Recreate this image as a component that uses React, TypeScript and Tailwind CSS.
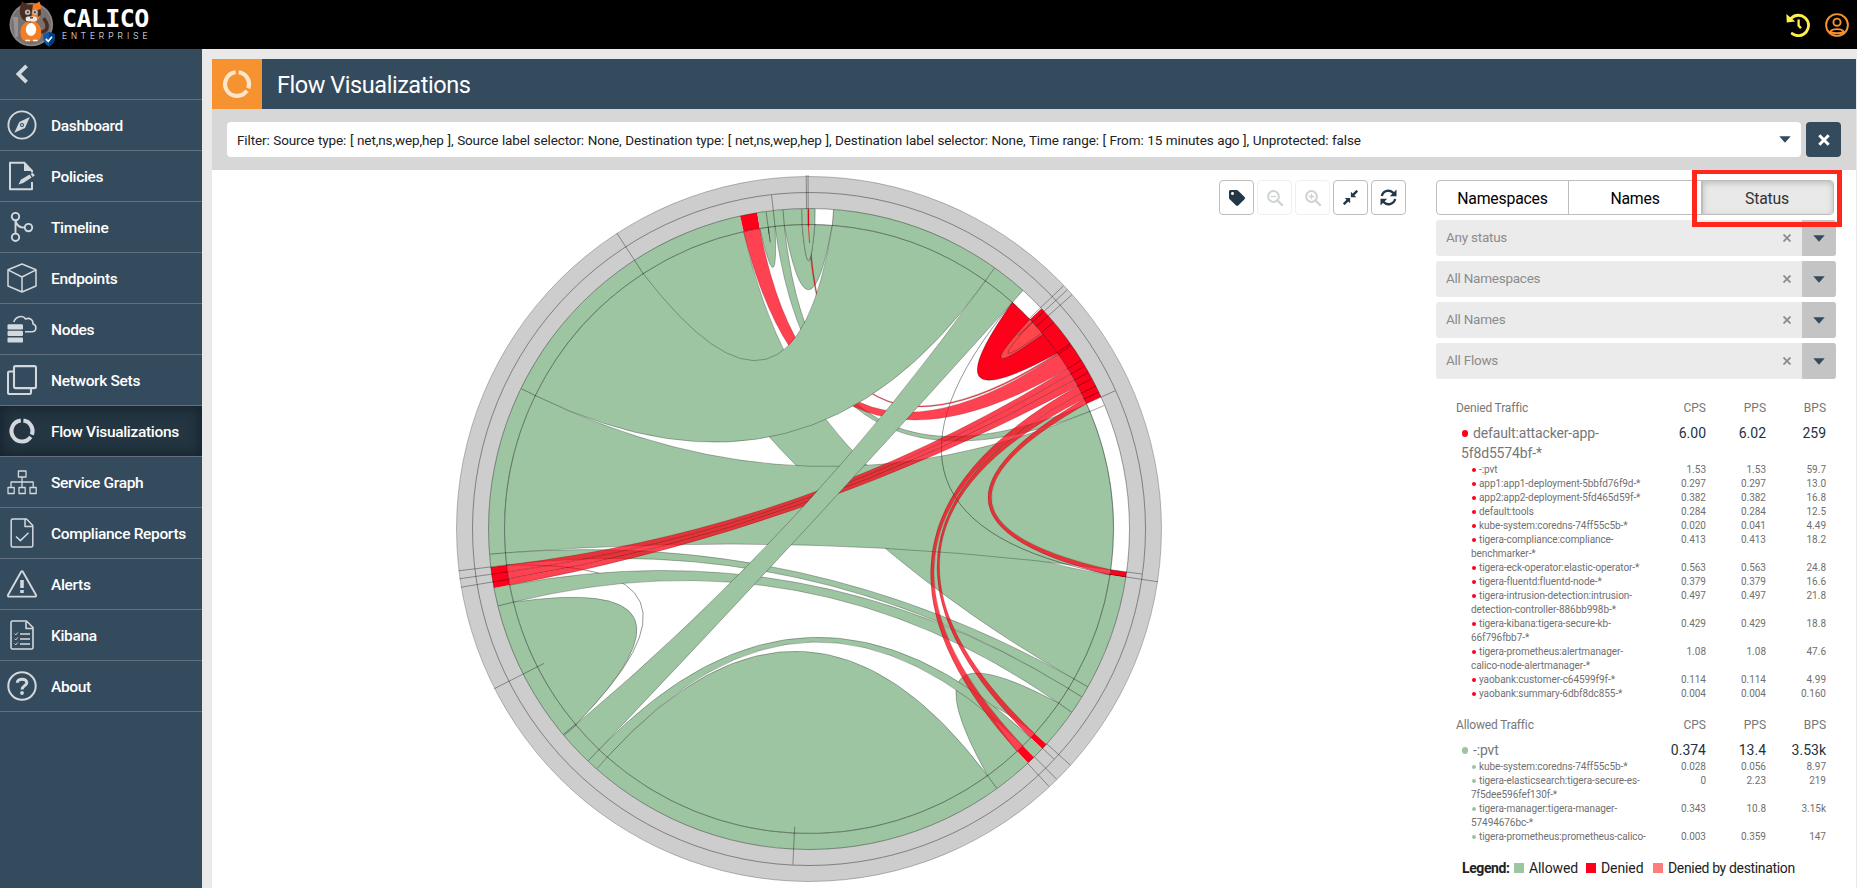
import React from "react";
import { FaTag } from "react-icons/fa";

/* ---------- chord diagram ---------- */

const R_IN = 304.5;
const RINGS = [320.5, 336.5, 352.5];
const GREEN = "#9dc5a2";
const RED = "#ff001b";
const RED_SOFT = "#ff0014";
const GREY = "#cdcdcd";

const pt = (deg: number, r: number): [number, number] => {
  const a = (deg * Math.PI) / 180;
  return [r * Math.sin(a), -r * Math.cos(a)];
};
const f = (p: [number, number]) => `${p[0].toFixed(2)} ${p[1].toFixed(2)}`;

/* span in degrees -> how far from the centre the control point sits */
const PULL: [number, number][] = [
  [0, 0.9], [2.4, 0.762], [3.7, 0.69], [9, 0.575], [12.9, 0.505], [26, 0.315], [32, 0.252],
  [37.4, 0.203], [56.7, 0.08], [64, 0.05], [77, 0.025], [95, 0], [180, 0],
];

function pull(span: number): number {
  for (let i = 1; i < PULL.length; i++) {
    const [s0, k0] = PULL[i - 1];
    const [s1, k1] = PULL[i];
    if (span <= s1) return k0 + ((k1 - k0) * (span - s0)) / (s1 - s0);
  }
  return 0;
}

function control(a: number, b: number): string {
  const d = ((((b - a) % 360) + 540) % 360) - 180;
  return f(pt(a + d / 2, R_IN * pull(Math.abs(d))));
}

function curve(a: number, b: number) {
  return `Q ${control(a, b)} ${f(pt(b, R_IN))}`;
}

function arc(r: number, to: number, large = 0, sweep = 1) {
  return `A ${r} ${r} 0 ${large} ${sweep} ${f(pt(to, r))}`;
}

function ribbon(a0: number, a1: number, b0: number, b1: number) {
  return `M ${f(pt(a0, R_IN))} ${arc(R_IN, a1)} ${curve(a1, b0)} ${arc(R_IN, b1)} ${curve(b1, a0)} Z`;
}

function lobe(a0: number, a1: number) {
  return `M ${f(pt(a0, R_IN))} ${arc(R_IN, a1)} ${curve(a1, a0)} Z`;
}

function band(r0: number, r1: number, a0: number, a1: number) {
  const span = (((a1 - a0) % 360) + 360) % 360;
  const large = span > 180 ? 1 : 0;
  return `M ${f(pt(a0, r1))} ${arc(r1, a1, large)} L ${f(pt(a1, r0))} ${arc(r0, a0, large, 0)} Z`;
}

type Shape = { d: string; c: string; o?: number; line?: boolean };

const shapes: Shape[] = [
  { d: ribbon(327, 347.6, 98.7, 119.5), c: GREEN },
  { d: ribbon(353.6, 355.35, 65.8, 67.3), c: GREEN },
  { d: ribbon(265.5, 296, 67.3, 97.7), c: GREEN },
  { d: ribbon(263.2, 265.5, 119.5, 121.6), c: GREEN },
  { d: `M ${f(pt(41.9, R_IN))} ${curve(41.9, 98.6)}`, c: "none", line: true },
  { d: `M ${f(pt(263.2, R_IN))} ${curve(262.4, 230.1)}`, c: "none", line: true },
  { d: ribbon(256.1, 259.4, 121.6, 124.9), c: GREEN },
  { d: lobe(230, 256.1), c: GREEN },
  { d: lobe(144.1, 221.5), c: GREEN },
  { d: ribbon(124.9, 132.2, 136.9, 144.1), c: GREEN },
  { d: ribbon(221.5, 223.6, 133.3, 135.4), c: GREEN },
  { d: ribbon(350.7, 352.3, 352.3, 353.6), c: GREEN },
  { d: ribbon(355.35, 358.7, 1.1, 4.4), c: GREEN },
  { d: ribbon(347.6, 350.7, 55, 58.2), c: RED_SOFT, o: 0.74 },
  { d: ribbon(58.2, 59.4, 261.9, 263.2), c: RED_SOFT, o: 0.74 },
  { d: ribbon(59.4, 60.7, 260.6, 261.9), c: RED_SOFT, o: 0.74 },
  { d: ribbon(60.7, 62, 259.4, 260.6), c: RED_SOFT, o: 0.74 },
  { d: ribbon(62, 63.5, 135.4, 136.9), c: RED_SOFT, o: 0.74 },
  { d: ribbon(63.5, 64.7, 132.2, 133.3), c: RED_SOFT, o: 0.74 },
  { d: ribbon(64.7, 65.7, 97.7, 98.7), c: RED_SOFT, o: 0.74 },
  { d: ribbon(359.8, 0.05, 54.7, 55), c: RED_SOFT, o: 0.74 },
  { d: ribbon(41.9, 46.5, 50.2, 54.7), c: RED },
  { d: lobe(46.5, 50.2), c: "#ff474b" },
  { d: `M ${f(pt(47.2, R_IN))} ${curve(47.2, 49.9)}`, c: "none" },
  { d: lobe(358.7, 1.1), c: GREEN },
  { d: ribbon(35.4, 41.9, 223.6, 230), c: GREEN },
  { d: ribbon(296, 327, 4.4, 35.4), c: GREEN },
];

const innerSegments: [number, number, string][] = [
  [0.05, 1.1, GREEN], [1.1, 4.4, "#fff"], [4.4, 35.4, GREEN], [35.4, 41.9, GREEN],
  [41.9, 46.5, "#fff"], [46.5, 65.7, RED], [65.7, 97.7, "#fff"], [97.7, 98.7, RED],
  [98.7, 132.2, GREEN], [132.2, 133.3, RED], [133.3, 135.4, GREEN], [135.4, 136.9, RED],
  [136.9, 221.5, GREEN], [221.5, 259.4, GREEN], [259.4, 263.2, RED], [263.2, 347.6, GREEN],
  [347.6, 350.7, RED], [350.7, 359.8, GREEN],
];

const ticks: [number, number, number][] = [
  [35.4, 304, 320], [1.1, 304, 320], [4.4, 304, 320], [41.9, 304, 320], [327, 304, 353], [296, 304, 320],
  [46.3, 304, 352], [47.2, 285, 352], [48.3, 304, 352], [49.8, 304, 320], [54.6, 304, 320], [55, 304, 320],
  [58.2, 304, 320], [59.4, 304, 320], [60.7, 304, 320], [62, 304, 320], [63.5, 304, 320], [64.7, 304, 320],
  [65.7, 304, 336], [67.3, 304, 320], [97.7, 304, 336], [98.6, 304, 353], [119.5, 304, 320], [121.6, 304, 320],
  [124.9, 304, 320], [132.1, 320, 352], [133.2, 320, 336], [135.3, 320, 352], [137, 320, 352], [144.1, 304, 320],
  [182.75, 298, 336], [221.5, 304, 320], [223.6, 304, 320], [229.9, 304, 320], [230.1, 304, 320], [243.1, 297, 353],
  [256.1, 304, 320], [260.5, 304, 353], [261.9, 304, 353], [263.2, 304, 353], [265.5, 304, 320],
  [352.3, 298, 320], [353.6, 304, 336], [355.35, 304, 320], [358.7, 304, 320], [359.55, 320, 354], [359.85, 320, 354],
];

function ChordDiagram() {
  return (
    <svg viewBox="-356 -356 712 712" className="h-[712px] w-[712px] shrink-0" fill="none">
      <path d={band(320.5, 352.5, 0, 180)} fill={GREY} />
      <path d={band(320.5, 352.5, 180, 360)} fill={GREY} />
      {innerSegments.map(([a, b, c], i) => (
        <path key={i} d={band(R_IN, 320.5, a, b)} fill={c} />
      ))}
      {shapes.map((s, i) => (
        <path
          key={i}
          d={s.d}
          fill={s.c}
          fillOpacity={s.o ?? 1}
          stroke="#000"
          strokeOpacity={s.line ? 0.6 : s.o ? 0.28 : 0.45}
          strokeWidth={s.line ? 0.7 : 0.6}
        />
      ))}
      <path d={`M ${f(pt(359.9, 320))} L ${f(pt(359.9, 303))}`} stroke="#e8001b" strokeWidth="1.6" />
      <path d={`M ${f(pt(359.9, 303))} L ${f(pt(0.1, 286))}`} stroke="#d8302d" strokeWidth="0.9" />
      <circle r={R_IN} stroke="#000" strokeOpacity="0.3" strokeWidth="0.75" />
      <circle r={RINGS[0]} stroke="#000" strokeOpacity="0.5" strokeWidth="0.75" />
      <circle r={RINGS[1]} stroke="#000" strokeOpacity="0.5" strokeWidth="0.75" />
      <circle r={RINGS[2]} stroke="#000" strokeOpacity="0.35" strokeWidth="0.75" />
      {ticks.map(([a, r0, r1], i) => (
        <path key={i} d={`M ${f(pt(a, r0))} L ${f(pt(a, r1))}`} stroke="#000" strokeOpacity="0.5" strokeWidth="0.7" />
      ))}
    </svg>
  );
}

/* ---------- icons ---------- */

function Svg({ children, w = 1.5 }: { children: React.ReactNode; w?: number }) {
  return (
    <svg viewBox="0 0 30 30" className="h-[30px] w-[30px]" fill="none" stroke="currentColor" strokeWidth={w} strokeLinejoin="round">
      {children}
    </svg>
  );
}

const DonutPaths = () => (
  <>
    <path d="M13.8 4.6 A 10.5 10.5 0 1 0 23.7 20.9" />
    <path d="M16.4 4.6 A 10.5 10.5 0 0 1 24.9 18.7" />
  </>
);

const icons: Record<string, React.ReactNode> = {
  Dashboard: (
    <Svg w={1.9}>
      <circle cx="15" cy="15" r="13.6" />
      <path d="M22.8 7 L18 18 L7.3 22.8 L12.3 12 Z" fill="currentColor" stroke="none" />
      <circle cx="15" cy="15" r="2" fill="#344a5d" stroke="none" />
      <circle cx="15" cy="15" r="1" fill="currentColor" stroke="none" />
    </Svg>
  ),
  Policies: (
    <Svg w={2}>
      <path d="M25 11.5 V10 L17.5 1.8 H3 V28.2 H25 V21" />
      <path d="M17 1 L26 10 H17 Z" fill="currentColor" stroke="none" />
      <path d="M11.5 23.5 L13.8 18.8 L22.6 13.4 L24.6 16.6 L16.2 22 Z M23.6 12.8 L26 11.9 L27.8 14.4 L25.6 16 Z" fill="currentColor" stroke="none" />
    </Svg>
  ),
  Timeline: (
    <Svg w={1.9}>
      <circle cx="8.5" cy="4.6" r="3.7" />
      <circle cx="8.5" cy="25.3" r="3.7" />
      <circle cx="21.5" cy="15.6" r="3.7" />
      <path d="M8.5 8.5 V21.5 M8.5 8.5 C 9.5 14, 13 15.6, 17.8 15.6" />
    </Svg>
  ),
  Endpoints: (
    <Svg w={1.5}>
      <path d="M15 1 L29 6.8 V23 L15 29 L1 23 V6.8 Z M1 6.8 L15 14 L29 6.8 M15 14 V29" />
    </Svg>
  ),
  Nodes: (
    <Svg w={1.6}>
      <g fill="currentColor" stroke="none">
        <rect x="0.5" y="10.2" width="15.5" height="5.2" rx="1.2" />
        <rect x="0.5" y="16.8" width="15.5" height="5.2" rx="1.2" />
        <rect x="0.5" y="23.4" width="15.5" height="5.2" rx="1.2" />
      </g>
      <path d="M6.8 8 C 8.5 2.5, 16 0.5, 18.6 5 C 23 3, 26.5 6.5, 25.8 9.8 C 30.5 11.5, 29.5 17.8, 25 17.8 H18" />
    </Svg>
  ),
  "Network Sets": (
    <Svg w={2.1}>
      <rect x="7" y="1.1" width="22" height="22" rx="1.5" />
      <path d="M7 6.5 H2.5 Q1 6.5 1 8 V27.5 Q1 29 2.5 29 H22.5 Q24 29 24 27.5 V23" />
    </Svg>
  ),
  "Flow Visualizations": <Svg w={4}><DonutPaths /></Svg>,
  "Service Graph": (
    <Svg w={1.3}>
      <rect x="11.4" y="4" width="7.6" height="6" />
      <rect x="1" y="20.5" width="6.2" height="6" />
      <rect x="12" y="20.5" width="6.2" height="6" />
      <rect x="23" y="20.5" width="6.2" height="6" />
      <path d="M15 10 V20.5 M4 20.5 V15 H26.2 V20.5" />
    </Svg>
  ),
  "Compliance Reports": (
    <Svg w={1.5}>
      <path d="M19.5 1 H6 Q4.2 1 4.2 2.5 V27.5 Q4.2 29 6 29 H24 Q25.8 29 25.8 27.5 V7.5 Z M18 1 V8.5 H25.8 M9 18.5 L13.4 22.6 L21.5 14.8" />
    </Svg>
  ),
  Alerts: (
    <Svg w={1.9}>
      <path d="M14 3 Q15 1.6 16 3 L29 26 Q29.3 27.6 28 27.6 H2 Q0.7 27.6 1 26 Z" />
      <path d="M15 11 V19" strokeWidth="3.6" />
      <path d="M15 21 V24" strokeWidth="3.6" />
    </Svg>
  ),
  Kibana: (
    <Svg w={1.6}>
      <path d="M19.5 1 H5.5 Q4 1 4 2.5 V27.5 Q4 29 5.5 29 H24.5 Q26 29 26 27.5 V7.5 Z M19 2 V8.5 H26" />
      <path d="M7.5 13.6 L8.8 14.9 L10.8 12.5 M7.5 18.6 L8.8 19.9 L10.8 17.5 M7.5 23.6 L8.8 24.9 L10.8 22.5" strokeWidth="1" />
      <path d="M13 14 H23 M13 19 H23 M13 24 H23" />
    </Svg>
  ),
  About: (
    <Svg w={2}>
      <circle cx="15" cy="15" r="13.7" />
      <path d="M10.3 11.8 C 10.3 7, 19.8 7, 19.8 11.8 C 19.8 14.6, 15 14.8, 15 18.6" strokeWidth="3" />
      <circle cx="15" cy="22" r="1.9" fill="currentColor" stroke="none" />
    </Svg>
  ),
};

const nav = Object.keys(icons);

function Mascot() {
  return (
    <svg viewBox="0 0 48 49" className="h-[49px] w-[48px]">
      <circle cx="22.3" cy="24.5" r="21.8" fill="#8b8583" />
      <circle cx="22.3" cy="24.5" r="20" fill="#767070" />
      <path d="M4 17 h5 v20 h-3 z" fill="#989191" />
      <path d="M31 32 C 39 32, 40 26, 35.5 19.5" fill="none" stroke="#4b2e22" strokeWidth="3.6" strokeLinecap="round" />
      <path d="M12 36 C 10 28, 14 21, 22 21 C 30 21, 33.5 28, 32 36 Q31 41 27 41 H17 Q13 41 12 36 Z" fill="#f27d24" />
      <ellipse cx="22" cy="29.5" rx="5.2" ry="6.5" fill="#fff" />
      <path d="M20 4.6 H25.5 L30.5 1.5 Q33 7 31.8 14 Q30 22.5 22 22.5 Z" fill="#f27d24" />
      <path d="M24 4.6 H18.5 L13 1.5 Q10.2 8 11 14 Q13 22.5 22 22.5 L23 11 Z" fill="#4b2e22" />
      <path d="M28.5 10 L31.8 9 L32 15 L29 17 Z" fill="#4b2e22" />
      <circle cx="18.6" cy="12.3" r="2.7" fill="#b9b9b9" />
      <circle cx="26" cy="12.3" r="2.7" fill="#b9b9b9" />
      <circle cx="18.8" cy="12.3" r="1" fill="#333" />
      <circle cx="25.8" cy="12.3" r="1" fill="#333" />
      <rect x="16.6" y="16.6" width="11.4" height="5" rx="2.5" fill="#e9e9e9" />
      <path d="M21 17 h3 v1.6 h-3 z" fill="#6d4a3a" />
      <path d="M16.5 40.5 h4.5 M24 40.5 h4.5" stroke="#fff" strokeWidth="1.6" />
      <path d="M34.3 34 L39.7 32 L45.7 34 V39 Q45 44 40 46.5 Q34.8 44 34.3 39 Z" fill="#0c5aa6" />
      <path d="M39.9 32 L45.7 34 V39 Q45 44 40 46.5 Z" fill="#063c7d" />
      <path d="M36.8 39 L39.3 41.3 L43 36.8" fill="none" stroke="#fff" strokeWidth="1.7" />
    </svg>
  );
}

/* ---------- right panel ---------- */

type Row = { lines: string[]; v: [string, string, string] };

const denied: Row[] = [
  { lines: ["-:pvt"], v: ["1.53", "1.53", "59.7"] },
  { lines: ["app1:app1-deployment-5bbfd76f9d-*"], v: ["0.297", "0.297", "13.0"] },
  { lines: ["app2:app2-deployment-5fd465d59f-*"], v: ["0.382", "0.382", "16.8"] },
  { lines: ["default:tools"], v: ["0.284", "0.284", "12.5"] },
  { lines: ["kube-system:coredns-74ff55c5b-*"], v: ["0.020", "0.041", "4.49"] },
  { lines: ["tigera-compliance:compliance-", "benchmarker-*"], v: ["0.413", "0.413", "18.2"] },
  { lines: ["tigera-eck-operator:elastic-operator-*"], v: ["0.563", "0.563", "24.8"] },
  { lines: ["tigera-fluentd:fluentd-node-*"], v: ["0.379", "0.379", "16.6"] },
  { lines: ["tigera-intrusion-detection:intrusion-", "detection-controller-886bb998b-*"], v: ["0.497", "0.497", "21.8"] },
  { lines: ["tigera-kibana:tigera-secure-kb-", "66f796fbb7-*"], v: ["0.429", "0.429", "18.8"] },
  { lines: ["tigera-prometheus:alertmanager-", "calico-node-alertmanager-*"], v: ["1.08", "1.08", "47.6"] },
  { lines: ["yaobank:customer-c64599f9f-*"], v: ["0.114", "0.114", "4.99"] },
  { lines: ["yaobank:summary-6dbf8dc855-*"], v: ["0.004", "0.004", "0.160"] },
];

const allowed: Row[] = [
  { lines: ["kube-system:coredns-74ff55c5b-*"], v: ["0.028", "0.056", "8.97"] },
  { lines: ["tigera-elasticsearch:tigera-secure-es-", "7f5dee596fef130f-*"], v: ["0", "2.23", "219"] },
  { lines: ["tigera-manager:tigera-manager-", "57494676bc-*"], v: ["0.343", "10.8", "3.15k"] },
  { lines: ["tigera-prometheus:prometheus-calico-", "node-prometheus-*"], v: ["0.003", "0.359", "147"] },
];

const Values = ({ v }: { v: [string, string, string] }) => (
  <>
    {v.map((x, i) => (
      <span key={i} className="w-[60px] shrink-0 text-right">{x}</span>
    ))}
  </>
);

function Group({ title, head, total, rows, dot }: {
  title: string; head: string[]; total: [string, string, string]; rows: Row[]; dot: string;
}) {
  return (
    <div>
      <div className="flex h-[25px] items-start pl-5 text-[12px] leading-[20px] text-[#777]">
        <span className="flex-1 tracking-[-0.15px]">{title}</span>
        <Values v={["CPS", "PPS", "BPS"]} />
      </div>
      <div className="flex pl-[25px] text-[14px] leading-[20px] text-[#1f3241]">
        <div className="flex-1 whitespace-nowrap text-[#777]">
          {head.map((h, i) => (
            <div key={h} className="flex items-center">
              {i === 0 && <span className={`mr-[5px] ml-px h-[7px] w-[6px] rounded-full ${dot}`} />}
              <span className="tracking-[-0.15px]">{h}</span>
            </div>
          ))}
        </div>
        <Values v={total} />
      </div>
      {rows.map((r) => (
        <div key={r.lines[0]} className="flex pl-[35px] text-[10px] leading-[14px] text-[#707070]">
          <div className="flex-1 whitespace-nowrap">
            {r.lines.map((l, i) => (
              <div key={l} className="flex items-center">
                {i === 0 && <span className={`mr-[3px] ml-px h-[4px] w-[4px] rounded-full ${dot}`} />}
                <span className="tracking-[-0.07px]">{l}</span>
              </div>
            ))}
          </div>
          <Values v={r.v} />
        </div>
      ))}
    </div>
  );
}

const Caret = () => (
  <svg viewBox="0 0 12 7" className="h-[7px] w-[12px]">
    <path d="M0.3 0.3 H11.7 L6 6.7 Z" fill="#344a5d" />
  </svg>
);

function ToolButton({ children, disabled }: { children: React.ReactNode; disabled?: boolean }) {
  return (
    <button
      className={`flex h-[35px] w-[35px] items-center justify-center rounded-[4px] border bg-white ${
        disabled ? "border-[#f0f0f0] text-[#d0d3d5]" : "border-[#bdbdbd] text-[#243746]"
      }`}
    >
      {children}
    </button>
  );
}

const Zoom = ({ plus }: { plus?: boolean }) => (
  <svg viewBox="0 0 16 16" className="h-[16px] w-[16px]" fill="none" stroke="currentColor">
    <circle cx="6.5" cy="6.5" r="5.4" strokeWidth="2" />
    <path d="M10.5 10.5 L15 15" strokeWidth="2.4" strokeLinecap="round" />
    <path d={plus ? "M3.8 6.5 H9.2 M6.5 3.8 V9.2" : "M3.8 6.5 H9.2"} strokeWidth="1.4" />
  </svg>
);

export default function App() {
  return (
    <div className="flex h-[888px] w-[1857px] flex-col overflow-hidden bg-[#e9e9e9] font-['Roboto',sans-serif]">
      <header className="flex h-[49px] shrink-0 items-center justify-between bg-black pr-[8px] pl-[9px]">
        <div className="flex items-center">
          <Mascot />
          <div className="flex flex-col pl-[5px] text-white">
            <span className="mt-[-1px] font-['DejaVu_Sans_Mono',monospace] text-[25px] leading-[24px] font-bold tracking-[-0.6px]">CALICO</span>
            <span className="text-[8.5px] leading-[10px] font-light tracking-[4.05px]">ENTERPRISE</span>
          </div>
        </div>
        <div className="flex items-center gap-[15px]">
          <svg viewBox="0 0 24 24" className="h-[24px] w-[24px]" fill="none" stroke="#ffee52">
            <path d="M5.2 5.2 A 10.2 10.2 0 1 1 6.2 20.6" strokeWidth="2.8" strokeLinecap="round" />
            <path d="M0.3 1 L0.8 9.5 L9.2 8.6 Z" fill="#ffee52" stroke="none" />
            <path d="M12.6 6.5 V12.5 L15 15.2" strokeWidth="2.3" />
          </svg>
          <svg viewBox="0 0 24 24" className="h-[24px] w-[24px]" fill="none" stroke="#f6922f" strokeWidth="1.9">
            <circle cx="12" cy="12" r="10.9" />
            <circle cx="12" cy="9.2" r="3.6" />
            <path d="M5 19 C 7.5 15.2, 16.5 15.2, 19 19 C 15 20.4, 9 20.4, 5 19 Z" />
          </svg>
        </div>
      </header>

      <div className="flex min-h-0 flex-1">
        <nav className="w-[202px] shrink-0 bg-[#344a5d] text-[#d3d8dc]">
          <div className="flex h-[51px] items-center border-b border-[#5f7180] pl-[15px]">
            <svg viewBox="0 0 14 20" className="h-[20px] w-[14px]" fill="none" stroke="currentColor" strokeWidth="3.8">
              <path d="M11.6 1.8 L3.4 10 L11.6 18.2" />
            </svg>
          </div>
          {nav.map((n) => (
            <div
              key={n}
              className={`flex h-[51px] items-center border-b border-[#5f7180] pl-[7px] ${
                n === "Flow Visualizations" ? "bg-[#233642] shadow-[inset_0_0_14px_2px_#17222b]" : ""
              }`}
            >
              {icons[n]}
              <span className="pt-[4px] pl-[14px] text-[15.5px] font-medium tracking-[-0.33px] whitespace-nowrap text-white">{n}</span>
            </div>
          ))}
        </nav>

        <main className="flex min-w-0 flex-1 flex-col pt-[10px] pr-px pl-[10px]">
          <div className="flex h-[50px] shrink-0 items-center bg-[#344a5d]">
            <div className="flex h-[50px] w-[50px] items-center justify-center bg-[#f6922f] text-[#fde6cc]">
              <svg viewBox="0 0 30 30" className="h-[34px] w-[34px]" fill="none" stroke="currentColor" strokeWidth="3.7">
                <DonutPaths />
              </svg>
            </div>
            <h1 className="pt-[3px] pl-[15px] text-[23.5px] tracking-[-0.45px] text-white">Flow Visualizations</h1>
          </div>

          <div className="flex h-[61px] shrink-0 gap-[5px] bg-[#d7d7d7] pt-[13px] pr-[15px] pl-[15px]">
            <div className="flex h-[35px] flex-1 items-center justify-between rounded-[4px] bg-white pr-[10px] pl-[10px]">
              <span className="pt-[2px] text-[13.5px] tracking-[-0.12px] whitespace-nowrap text-[#222] [word-spacing:0.43px]">
                Filter: Source type: [ net,ns,wep,hep ], Source label selector: None, Destination type: [ net,ns,wep,hep ], Destination label selector: None, Time range: [ From: 15 minutes ago ], Unprotected: false
              </span>
              <Caret />
            </div>
            <button className="flex h-[35px] w-[35px] items-center justify-center rounded-[4px] bg-[#344a5d]">
              <svg viewBox="0 0 12 12" className="h-[12px] w-[12px]" stroke="#fff" strokeWidth="3"><path d="M1.3 1.3 L10.7 10.7 M10.7 1.3 L1.3 10.7" /></svg>
            </button>
          </div>

          <div className="flex min-h-0 flex-1 overflow-hidden bg-white">
            <div className="flex w-[1007px] shrink-0 justify-end overflow-hidden pl-[240px]">
              <div className="mt-[2.7px] mr-[54.3px] h-[712px] w-[712px] shrink-0">
                <ChordDiagram />
              </div>
            </div>
            <div className="flex w-[217px] shrink-0 items-start gap-[3px] pt-[10px]">
              <ToolButton><FaTag className="h-[16px] w-[16px]" /></ToolButton>
              <ToolButton disabled><Zoom /></ToolButton>
              <ToolButton disabled><Zoom plus /></ToolButton>
              <ToolButton>
                <svg viewBox="0 0 16 16" className="h-[15px] w-[15px]" fill="currentColor" stroke="currentColor">
                  <path d="M15.2 0.8 L10.5 5.5 M0.8 15.2 L5.5 10.5" strokeWidth="2.6" />
                  <path d="M8.4 1.8 V7.6 H14.2 Z M7.6 14.2 V8.4 H1.8 Z" stroke="none" />
                </svg>
              </ToolButton>
              <ToolButton>
                <svg viewBox="0 0 17 17" className="h-[17px] w-[17px]" fill="none" stroke="currentColor" strokeWidth="2.3">
                  <path d="M1.8 7 A 6.8 6.8 0 0 1 13.6 4.2 M15.2 10 A 6.8 6.8 0 0 1 3.4 12.8" />
                  <path d="M16.5 0.5 V7.2 H9.8 Z M0.5 16.5 V9.8 H7.2 Z" fill="currentColor" stroke="none" />
                </svg>
              </ToolButton>
            </div>

            <aside className="flex w-[400px] shrink-0 flex-col pt-[10px]">
              <div className="relative flex h-[35px] w-[398px] shrink-0 rounded-[4px] border border-[#bdbdbd] text-[15.8px] tracking-[-0.2px] text-black">
                <div className="flex w-[132px] items-center justify-center border-r border-[#bdbdbd] pt-[2px]">Namespaces</div>
                <div className="flex w-[132px] items-center justify-center pt-[2px]">Names</div>
                <div className="flex flex-1 items-center justify-center rounded-r-[3px] border-l-2 border-[#bdbdbd] bg-[#e9e9e9] pt-[2px] pr-[2px] text-[#333] shadow-[inset_0_2px_6px_#bbb]">Status</div>
                <div className="absolute top-[-12px] left-[255px] z-10 h-[58px] w-[150px] border-[5px] border-[#ff261c]" />
              </div>
              <div className="mt-[5px] flex shrink-0 flex-col gap-[5px]">
                {["Any status", "All Namespaces", "All Names", "All Flows"].map((s) => (
                  <div key={s} className="flex h-[36px] overflow-hidden rounded-[3px] bg-[#ebebeb]">
                    <div className="flex flex-1 items-center justify-between pr-[11px] pl-[10px] text-[13.5px] tracking-[-0.25px] text-[#8c8c8c]">
                      <span className="pb-px">{s}</span>
                      <svg viewBox="0 0 8 8" className="h-[8px] w-[8px]" stroke="#8c8c8c" strokeWidth="1.8"><path d="M0.5 0.5 L7.5 7.5 M7.5 0.5 L0.5 7.5" /></svg>
                    </div>
                    <div className="flex w-[34px] items-center justify-center bg-[#c4c4c4]"><Caret /></div>
                  </div>
                ))}
              </div>

              <div className="mt-[19px] h-[448px] shrink-0 overflow-hidden pr-[10px]">
                <Group title="Denied Traffic" head={["default:attacker-app-", "5f8d5574bf-*"]} total={["6.00", "6.02", "259"]} rows={denied} dot="bg-[#ff001b]" />
                <div className="h-[14px]" />
                <Group title="Allowed Traffic" head={["-:pvt"]} total={["0.374", "13.4", "3.53k"]} rows={allowed} dot="bg-[#9dc5a2]" />
              </div>

              <div className="flex items-center pt-[12px] pl-[26px] text-[14px] leading-[20px] tracking-[-0.1px] whitespace-nowrap text-[#222]">
                <span className="w-[52px] font-bold tracking-[-0.4px]">Legend:</span>
                <span className="mr-[5px] h-[10px] w-[10px] bg-[#9dc5a2]" />
                <span className="w-[57px]">Allowed</span>
                <span className="mr-[5px] h-[10px] w-[10px] bg-[#ff001b]" />
                <span className="w-[52px]">Denied</span>
                <span className="mr-[5px] h-[10px] w-[10px] bg-[#ff7d7d]" />
                <span className="tracking-[-0.34px]">Denied by destination</span>
              </div>
            </aside>
          </div>
        </main>
      </div>
    </div>
  );
}
